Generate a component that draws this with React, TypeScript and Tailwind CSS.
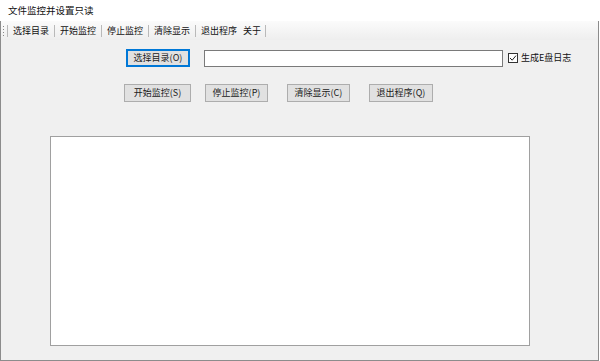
import React from "react";

const font = { fontFamily: '"Noto Sans CJK SC", "Noto Sans", sans-serif' };

function Btn({ label, focused, w }: { label: string; focused?: boolean; w: string }) {
  return (
    <div
      className={
        "h-[18px] flex items-center justify-center text-[9px] text-[#1a1a1a] bg-[#e1e1e1] border " +
        (focused ? "border-[#0078d7] shadow-[inset_0_0_0_1px_#0078d7]" : "border-[#adadad]") +
        " " + w
      }
    >
      {label}
    </div>
  );
}

function Sep() {
  return <div className="w-px h-[12px] bg-[#b9b9b9] mx-[2px]" />;
}

export default function App() {
  const items = ["选择目录", "开始监控", "停止监控", "清除显示", "退出程序"];
  return (
    <div className="w-[600px] h-[361px] bg-white flex flex-col overflow-hidden" style={font}>
      <div className="h-[21px] flex items-center pl-[8px] text-[9.5px] text-[#111]">文件监控并设置只读</div>
      <div className="w-[599px] flex-1 bg-[#f0f0f0] border-l border-r border-b border-[#8c8c8c] flex flex-col">
        <div className="h-[19px] flex items-center pl-[2px] text-[9px] text-[#111] bg-gradient-to-b from-[#fbfbfb] to-[#eeeeee]">
          <div className="flex flex-col gap-[2px] mr-px">
            <div className="w-px h-px bg-[#888]" />
            <div className="w-px h-px bg-[#888]" />
            <div className="w-px h-px bg-[#888]" />
            <div className="w-px h-px bg-[#888]" />
          </div>
          <Sep />
          {items.map((t, i) => (
            <React.Fragment key={t}>
              <span className="px-[3px]">{t}</span>
              {i < items.length - 1 && <Sep />}
            </React.Fragment>
          ))}
          <span className="px-[2px] ml-[1px]">关于</span>
          <Sep />
        </div>
        <div className="flex items-center mt-[9px] h-[18px]">
          <div className="ml-[125px]">
            <Btn label="选择目录(O)" focused w="w-[64px]" />
          </div>
          <div className="ml-[14px] w-[299px] h-[17px] bg-white border border-[#7a7a7a]" />
          <div className="ml-[5px] flex items-center">
            <div className="w-[10px] h-[10px] border border-[#333] bg-white flex items-center justify-center">
              <svg width="8" height="8" viewBox="0 0 8 8">
                <path d="M1 4 L3.2 6.2 L7 1.6" fill="none" stroke="#222" strokeWidth="1" />
              </svg>
            </div>
            <span className="ml-[3px] text-[9px] text-[#111]">生成E盘日志</span>
          </div>
        </div>
        <div className="flex items-center mt-[17px] h-[18px]">
          <div className="ml-[123px]">
            <Btn label="开始监控(S)" w="w-[67px]" />
          </div>
          <div className="ml-[14px]">
            <Btn label="停止监控(P)" w="w-[63px]" />
          </div>
          <div className="ml-[19px]">
            <Btn label="清除显示(C)" w="w-[63px]" />
          </div>
          <div className="ml-[19px]">
            <Btn label="退出程序(Q)" w="w-[64px]" />
          </div>
        </div>
        <div className="ml-[49px] mt-[34px] w-[480px] h-[210px] bg-white border border-[#a0a0a0]" />
      </div>
    </div>
  );
}
